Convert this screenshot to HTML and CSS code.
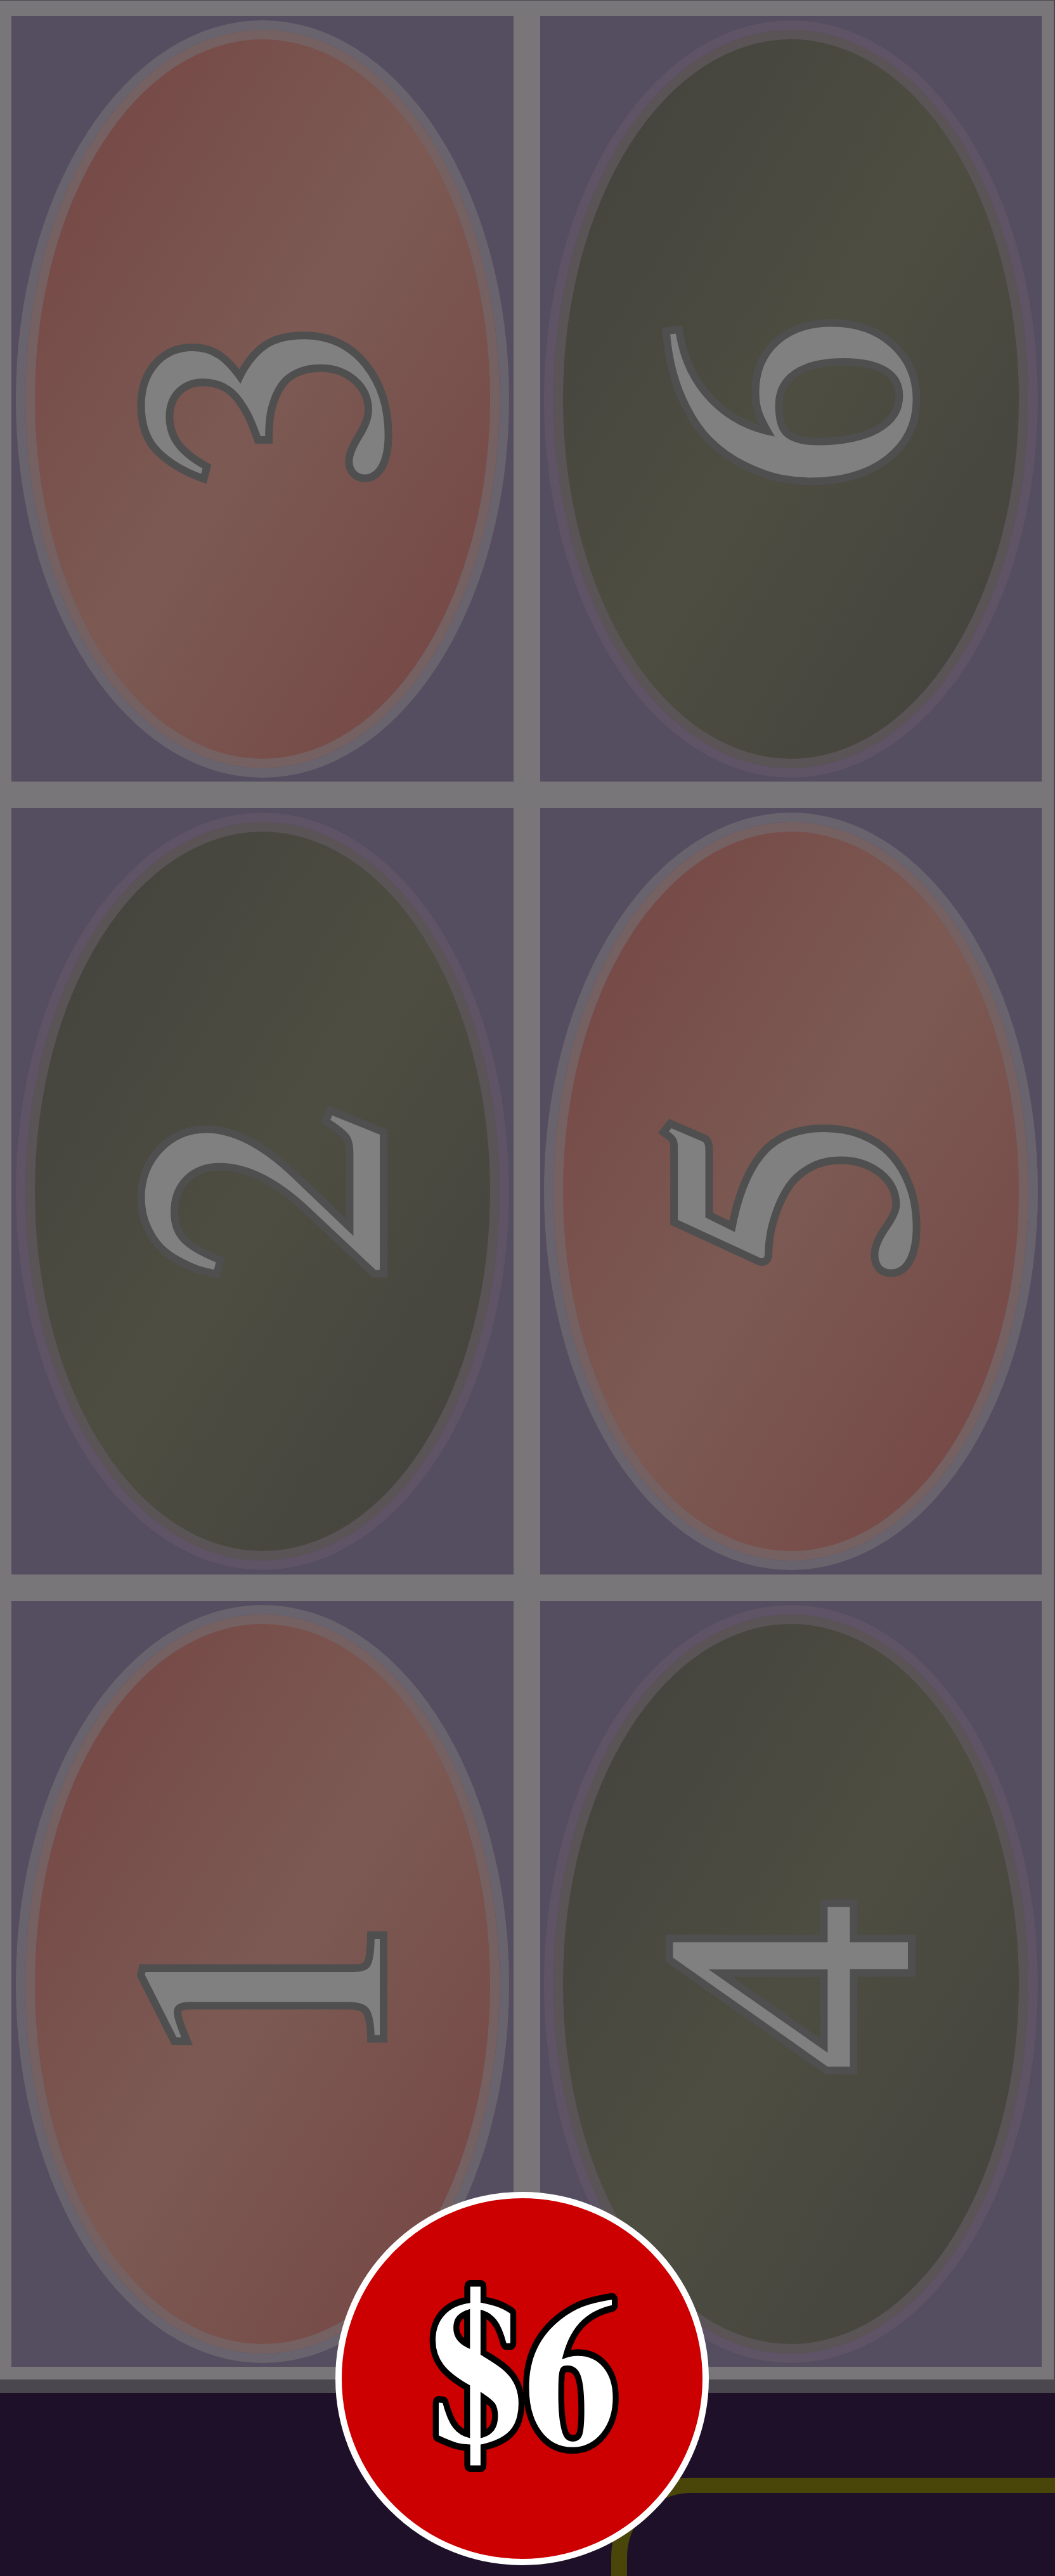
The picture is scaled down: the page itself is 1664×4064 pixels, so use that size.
FILE: index.html
```html
<!DOCTYPE html>
<html lang="en">
<head>
<meta charset="utf-8">
<title>Roulette table</title>
<link rel="stylesheet" href="styles.css">
</head>
<body>
<div class="page">
  <div class="table">
    <div class="cell"><div class="oval red"><div class="face"><svg class="num" viewBox="-300 -300 600 600"><text x="-6" y="185" transform="rotate(-90)">3</text></svg></div></div></div>
    <div class="cell"><div class="oval black"><div class="face"><svg class="num" viewBox="-300 -300 600 600"><text x="-6" y="185" transform="rotate(-90)">6</text></svg></div></div></div>
    <div class="cell"><div class="oval black"><div class="face"><svg class="num" viewBox="-300 -300 600 600"><text x="-4" y="185" transform="rotate(-90)">2</text></svg></div></div></div>
    <div class="cell"><div class="oval red"><div class="face"><svg class="num" viewBox="-300 -300 600 600"><text x="-4" y="185" transform="rotate(-90)">5</text></svg></div></div></div>
    <div class="cell"><div class="oval red"><div class="face"><svg class="num" viewBox="-300 -300 600 600"><text x="-8" y="185" transform="rotate(-90)">1</text></svg></div></div></div>
    <div class="cell"><div class="oval black"><div class="face"><svg class="num" viewBox="-300 -300 600 600"><text x="0" y="185" transform="rotate(-90)">4</text></svg></div></div></div>
  </div>
  <div class="felt"><div class="zone"></div></div>
  <div class="chip"><svg class="chip-svg" viewBox="-284.5 -284.5 569 569"><text x="3" y="104" transform="scale(0.89 1)">$6</text></svg></div>
</div>
</body>
</html>
```
FILE: styles.css
```css
html, body {
  margin: 0;
  padding: 0;
  overflow: hidden;
}
body {
  background: #1e1029;
  font-family: "FreeSerif", "Liberation Serif", serif;
}
.page {
  position: relative;
  width: 1664px;
  height: 4064px;
  background: #1e1029;
}
.table {
  box-sizing: border-box;
  height: 3775px;
  display: grid;
  grid-template-columns: 1fr 1fr;
  grid-template-rows: repeat(3, 1fr);
  gap: 42px;
  padding: 24px 19px 20px 18px;
  background: #787679;
  border-top: 1px solid #4a494d;
  border-right: 2px solid #4a484e;
  border-bottom: 21px solid #4a484e;
}
.cell {
  background: #554d60;
  padding: 6.5px;
  display: flex;
  min-height: 0;
  min-width: 0;
}
.oval {
  flex: 1;
  display: flex;
  border-radius: 50%;
  border: 15px solid #68636e;
}
.face {
  flex: 1;
  display: flex;
  align-items: center;
  justify-content: center;
  border-radius: 50%;
  border: 15px solid #756161;
  overflow: visible;
}
.oval.red {
  border-color: #69636e;
}
.oval.red .face {
  border-color: #756161;
  background: linear-gradient(to bottom right, #744443 0%, #7c5a53 50%, #744443 100%);
}
.oval.black {
  border-color: #5f5366;
}
.oval.black .face {
  border-color: #5a5456;
  background: linear-gradient(to bottom right, #42423e 0%, #4e4d41 50%, #42423e 100%);
}
.num {
  width: 600px;
  height: 600px;
  flex: none;
  overflow: visible;
}
.num text {
  font-family: "FreeSerif", "Liberation Serif", serif;
  font-size: 548px;
  text-anchor: middle;
  fill: #808080;
  stroke: #4f4f4f;
  stroke-width: 24px;
  paint-order: stroke;
}
.felt {
  box-sizing: border-box;
  height: 289px;
  overflow: hidden;
  padding: 134px 0 0 964px;
}
.zone {
  width: 1000px;
  height: 400px;
  border-top: 24px solid #4a460a;
  border-left: 25px solid #4a460a;
  border-top-left-radius: 125px;
}
.chip {
  position: absolute;
  left: 529px;
  top: 3458px;
  width: 589px;
  height: 589px;
  box-sizing: border-box;
  border: 10px solid #ffffff;
  border-radius: 50%;
  background: #cc0000;
}
.chip-svg {
  display: block;
  width: 100%;
  height: 100%;
  overflow: visible;
}
.chip-svg text {
  font-family: "FreeSerif", "Liberation Serif", serif;
  font-weight: 700;
  font-size: 332px;
  text-anchor: middle;
  fill: #ffffff;
  stroke: #000000;
  stroke-width: 21px;
  stroke-linejoin: round;
  paint-order: stroke;
}
```
